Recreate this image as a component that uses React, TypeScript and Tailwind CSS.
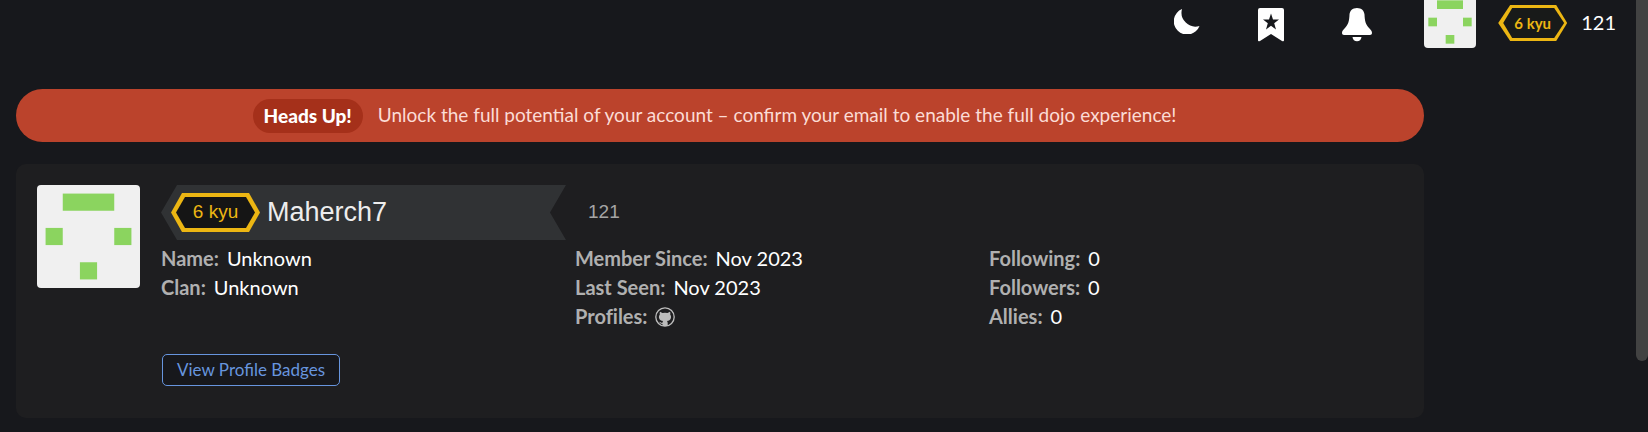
import React from "react";

function Avatar({ className }: { className: string }) {
  return (
    <svg viewBox="0 0 6 6" className={className} role="img" aria-label="Maherch7">
      <rect width="6" height="6" fill="#f0f0f0" />
      <g fill="#8bd45f">
        <rect x="1.5" y="0.5" width="3" height="1" />
        <rect x="0.5" y="2.5" width="1" height="1" />
        <rect x="4.5" y="2.5" width="1" height="1" />
        <rect x="2.5" y="4.5" width="1" height="1" />
      </g>
    </svg>
  );
}

function Moon() {
  return (
    <svg width="26" height="26" viewBox="0 0 26 26" fill="#fff" aria-hidden="true">
      <path d="M8 1A13.3 13.3 0 1 0 25.500 18A14 14 0 0 1 8 1Z" />
    </svg>
  );
}

function Bookmark() {
  return (
    <svg width="26" height="34" viewBox="0 0 26 34" fill="#fff" aria-hidden="true">
      <path
        fillRule="evenodd"
        d="M2 0H24Q26 0 26 2V32.300Q26 34 24 33L13 26L2 33Q0 34 0 32.300V2Q0 0 2 0ZM13 5.500L11 11.500H5L9.800 15.200L8 21.500L13 17.800L18 21.500L16.200 15.200L21 11.500H15Z"
      />
    </svg>
  );
}

function Bell() {
  return (
    <svg width="30" height="34" viewBox="0 0 30 34" fill="#fff" aria-hidden="true">
      <path d="M15 0C10.500 0 7.800 2.800 7.500 6.500C7.200 13 6.500 16.500 2.500 20.500C.8 22.200 0 23.300 0 25C0 26.300 .8 27 2 27H28C29.200 27 30 26.300 30 25C30 23.300 29.200 22.200 27.500 20.500C23.500 16.500 22.800 13 22.500 6.500C22.200 2.800 19.500 0 15 0Z" />
      <path d="M10.500 29H19.500C19.200 31.800 17.500 33.300 15 33.300S10.800 31.800 10.500 29Z" />
    </svg>
  );
}

function Field({ label, children }: { label: string; children: React.ReactNode }) {
  return (
    <div className="flex items-center gap-2">
      <dt className="font-bold text-[#b0b0b0]">{label}:</dt>
      <dd className="text-white">{children}</dd>
    </div>
  );
}

export default function App() {
  return (
    <div className="flex min-h-screen items-start bg-[#17181c] font-['Lato',sans-serif] text-white">
      <div className="min-w-0 flex-1">
        <header className="flex h-12 items-start justify-end overflow-hidden pr-5">
          <nav className="mr-13 flex items-start gap-[58px] pt-2" aria-label="Account">
            <button aria-label="Toggle dark mode"><Moon /></button>
            <button aria-label="Bookmarks"><Bookmark /></button>
            <button aria-label="Notifications"><Bell /></button>
          </nav>
          <Avatar className="-mt-1 size-[52px] rounded-[4px]" />
          <div className="mt-[5px] ml-[22px] h-9 w-[69px] bg-[#ecb613] [clip-path:polygon(0_50%,12px_0,58px_0,100%_50%,58px_100%,12px_100%)]">
            <div className="flex h-full items-center justify-center bg-[#181a19] text-[15px] font-bold text-[#ecb613] [clip-path:polygon(5px_50%,14px_3px,56px_3px,66px_50%,56px_33px,14px_33px)]">
              6 kyu
            </div>
          </div>
          <span className="mt-2 ml-[14px] text-xl leading-7">121</span>
        </header>

        <main className="mr-[212px] ml-4">
          <section className="mt-[41px] flex h-[53px] items-center justify-center gap-[15px] rounded-full bg-[#bb432c] pr-[11px] text-[19px]">
            <strong className="rounded-full bg-[#a5301a] px-[11px] leading-[34px] font-black">Heads Up!</strong>
            <p className="text-[#fbdcd6]">
              Unlock the full potential of your account – confirm your email to enable the full dojo experience!
            </p>
          </section>

          <section className="mt-[22px] flex items-start gap-[21px] rounded-[10px] bg-[#1e1e20] px-[21px] pt-[21px] pb-8">
            <Avatar className="size-[103px] shrink-0 rounded-[4px]" />
            <div className="min-w-0 flex-1">
              <div className="flex items-center font-['Liberation_Sans',sans-serif]">
                <div className="flex h-[55px] w-[405px] items-center bg-[#303234] pl-[10px] [clip-path:polygon(0_50%,16px_0,100%_0,389px_50%,100%_100%,16px_100%)]">
                  <div className="h-[39px] w-[89px] bg-[#ecb613] [clip-path:polygon(0_50%,11px_0,78px_0,100%_50%,78px_100%,11px_100%)]">
                    <div className="flex h-full items-center justify-center bg-[#151515] text-[19px] text-[#ecb613] [clip-path:polygon(5px_50%,14px_4px,75px_4px,84px_50%,75px_35px,14px_35px)]">
                      6 kyu
                    </div>
                  </div>
                  <h1 className="ml-[7px] text-[27px] text-[#ededed]">Maherch7</h1>
                </div>
                <span className="ml-[22px] text-[19px] text-[#a5a5a5]">121</span>
              </div>

              <div className="grid grid-cols-3 pt-1 text-xl leading-[29px] [font-variant-ligatures:none]">
                <dl>
                  <Field label="Name">Unknown</Field>
                  <Field label="Clan">Unknown</Field>
                </dl>
                <dl>
                  <Field label="Member Since">Nov 2023</Field>
                  <Field label="Last Seen">Nov 2023</Field>
                  <Field label="Profiles">
                    <a href="#github" aria-label="GitHub" className="block text-[#bdbdbd]">
                      <svg width="20" height="20" viewBox="0 0 20 20" fill="currentColor" aria-hidden="true">
                        <circle cx="10" cy="10" r="9.200" fill="none" stroke="currentColor" strokeWidth="1.300" />
                        <path d="M5 4.800L7.500 5.900Q10 5.400 12.500 5.900L15 4.800Q15.600 6.200 15.200 7.400C17 10 16 13.500 12 14Q12.700 14.800 12.700 16V19H7.500V17C5.300 17 5 15.500 4 14.700C5.500 14.700 6 16 7.500 15.700Q7.500 14.700 8.100 14C4 13.500 3 10 4.800 7.400Q4.400 6.200 5 4.800Z" />
                      </svg>
                    </a>
                  </Field>
                </dl>
                <dl>
                  <Field label="Following">0</Field>
                  <Field label="Followers">0</Field>
                  <Field label="Allies">0</Field>
                </dl>
              </div>

              <button className="mt-[23px] ml-px rounded-[5px] border border-[#6795de] bg-[#17181c] px-[14px] text-[17px] leading-[30px] text-[#6795de]">
                View Profile Badges
              </button>
            </div>
          </section>
        </main>
      </div>
      <div className="h-[361px] w-3 rounded-b-full bg-[#424242]" aria-hidden="true" />
    </div>
  );
}
